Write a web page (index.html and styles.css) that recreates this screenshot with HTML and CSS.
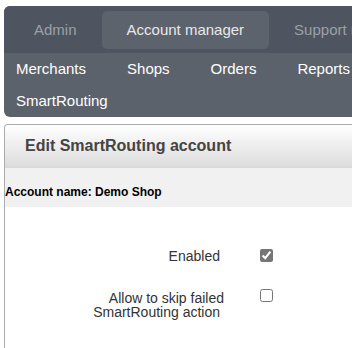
FILE: index.html
```html
<!DOCTYPE html>
<html>
<head>
<meta charset="utf-8">
<link rel="stylesheet" href="styles.css">
</head>
<body>
<div class="page">
  <nav class="nav">
    <div class="topbar">
      <div class="tab">Admin</div>
      <div class="tab active">Account manager</div>
      <div class="tab">Support manager</div>
    </div>
    <div class="subnav">
      <div class="subitem">Merchants</div>
      <div class="subitem">Shops</div>
      <div class="subitem">Orders</div>
      <div class="subitem">Reports</div>
      <div class="subitem">SmartRouting</div>
    </div>
  </nav>
  <section class="panel">
    <div class="panel-head">Edit SmartRouting account</div>
    <div class="account">Account name: Demo Shop</div>
    <div class="form">
      <div class="row">
        <label class="label" for="enabled">Enabled</label>
        <input class="check" type="checkbox" id="enabled" checked>
      </div>
      <div class="row row-multi">
        <label class="label" for="skip"><span class="line1">Allow to skip failed</span><span class="line2">SmartRouting action</span></label>
        <input class="check" type="checkbox" id="skip">
      </div>
    </div>
  </section>
</div>
</body>
</html>
```
FILE: styles.css
```css
html, body {
  margin: 0;
  padding: 0;
  overflow: hidden;
  background: #ffffff;
}
body {
  font-family: "Liberation Sans", Arial, sans-serif;
}
.page {
  padding: 6px 0 0 4px;
  width: 430px;
}
.nav {
  width: 420px;
  border-radius: 6px 6px 0 6px;
  overflow: hidden;
  background: #5c626c;
}
.topbar {
  display: flex;
  background: #4f5560;
  padding: 5px 5px 4px 5px;
}
.tab {
  height: 38px;
  line-height: 38px;
  padding: 0 25px;
  border-radius: 5px;
  font-size: 15px;
  color: #9aa0a8;
  white-space: nowrap;
}
.tab.active {
  background: #5d636d;
  color: #e8e8e8;
}
.subnav {
  display: flex;
  flex-wrap: wrap;
  column-gap: 41px;
  padding: 0 0 0 12px;
  width: 345px;
}
.subitem {
  line-height: 32px;
  height: 32px;
  font-size: 15px;
  color: #ffffff;
  white-space: nowrap;
}
.panel {
  margin-top: 7px;
  width: 420px;
  border: 1px solid #ababab;
  border-bottom: none;
  border-radius: 4px 4px 0 0;
  height: 240px;
}
.panel-head {
  height: 42px;
  line-height: 42px;
  padding-left: 20px;
  font-size: 16px;
  font-weight: bold;
  color: #444444;
  background: linear-gradient(#ffffff, #dcdcdc);
  border-bottom: 1px solid #e3d7cf;
  border-radius: 4px 4px 0 0;
}
.account {
  background: #f1f1f1;
  padding: 17px 0 8px 0;
  line-height: 14px;
  font-size: 12px;
  font-weight: bold;
  color: #000000;
}
.form {
  padding-top: 42px;
}
.row {
  display: flex;
  align-items: flex-start;
}
.row-multi {
  margin-top: 26px;
}
.label {
  width: 215px;
  text-align: right;
  font-size: 14px;
  line-height: 14px;
  color: #333333;
}
.row-multi .label {
  padding-top: 2px;
}
.line1, .line2 {
  display: block;
}
.line1 {
  margin-right: -4px;
}
.check {
  margin: 0 0 0 40px;
  width: 13px;
  height: 13px;
  accent-color: #767676;
}
```
